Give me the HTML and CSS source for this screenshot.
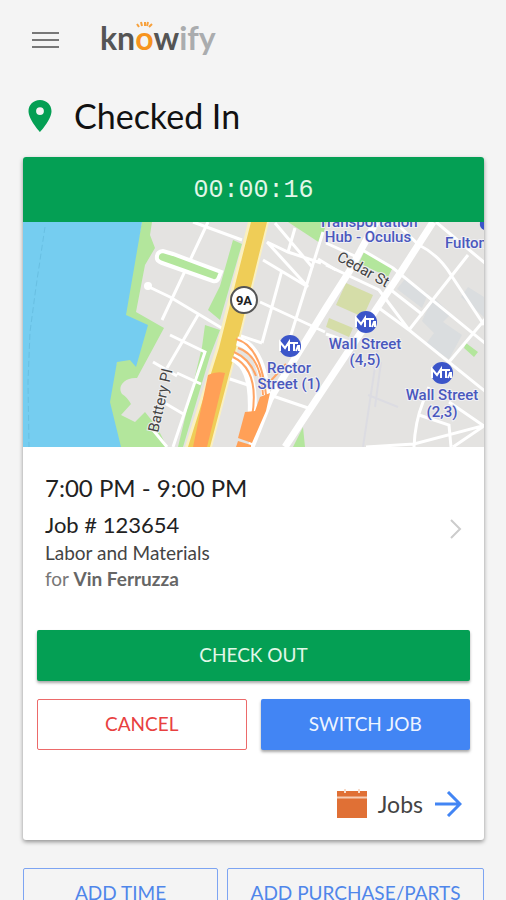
FILE: index.html
```html
<!DOCTYPE html>
<html lang="en">
<head>
<meta charset="utf-8">
<meta name="viewport" content="width=device-width, initial-scale=1">
<title>Knowify - Checked In</title>
<link rel="stylesheet" href="styles.css">
</head>

<body>
<header class="header">
	<button class="menu" type="button" aria-label="Menu"><span></span><span></span><span></span></button>
	<a class="logo" href="#">kn<span class="logo_o">o<svg class="rays" viewBox="0 0 18 7" aria-hidden="true">
		<path d="M2 3l2 3M6 1l1 4M10 1v4M13 1l-1 4M17 3l-3 3"/>
	</svg></span>w<span class="logo_ify">ify</span></a>
</header>

<main class="main">
	<div class="status">
		<svg class="pin" viewBox="0 0 24 32" aria-hidden="true">
			<path d="M12 0C5.200 0 .5 5 .5 11.200.5 19.500 12 32 12 32s11.500-12.500 11.500-20.800C23.500 5 18.800 0 12 0zm0 15a3.900 3.900 0 1 1 0-7.800 3.900 3.900 0 0 1 0 7.800z"/>
		</svg>
		<h1>Checked In</h1>
	</div>

	<section class="card">
		<div class="timer">00:00:16</div>

		<svg class="map" viewBox="0 0 461 225" role="img" aria-label="Map">
			<rect class="land" width="461" height="225"/>

			<!-- water and parks -->
			<path class="park" d="M119 0H129L127 13 132 26 122 43 113 90 141 106 114 156C101 155 94 165 99 172Q104 175 108 182L98 193 112 200 122 190 134 205 144 225H95L80 180 94 140 100 90z"/>
			<path class="water" d="M0 0H119L103 93 125 103 113 145 107 138 94 140 87 180 98 225H0z"/>
			<path class="ferry" d="M22 5L13 65 7 110 5 160 6 225"/>
			<path class="park" d="M210 18L219 22 197 98 185 88 197 64zM182 103L197 108 187 134 160 225H155L179 125zM265 0H304L297 21zM341 30L370 45 365 55 336 41zM443 121L455 130 451 135 441 126zM280 205L282 225H270z"/>
			<path class="square" d="M323 61L350 73 340 95 313 83zM306 96L330 106 326 115 303 105z"/>
			<path class="block" d="M410 75L428 92 420 100 439 113 426 137 403 122 411 111 399 99zM382 57L405 72 399 86 374 67zM445 65L461 75V95L438 75z"/>

			<!-- streets -->
			<g class="street">
				<path d="M124 64L147 75 197 105 215 113 239 121M185 0L139 98M170 0L219 18M147 113L182 130 150 225M175 93L144 146M130 140L154 154 147 150M140 180L162 193M130 208L144 225M154 151L178 162"/>
				<path d="M300 10L267 116M259 48L239 121M244 20L285 65M272 6L265 30M252 1L290 46M240 38L285 65M237 80L302 110M204 156L225 163M247 173L285 186M244 20L265 30 298 41M303 21L336 36M295 37L313 48"/>
				<path d="M303 43L356 68 386 108 463 170M375 3L396 23Q416 33 428 53L461 103M413 0L463 42M445 33L386 108M336 26L370 46 463 122M463 96L426 140M368 68L400 93M356 86L386 108"/>
				<path d="M406 165L400 180Q392 200 391 225M396 193L426 203 428 225M343 225L391 222 463 203M426 180L461 204 430 225M303 112L326 120"/>
			</g>
			<path class="faint" d="M355 125L340 225M345 173L375 185M358 140L352 185"/>
			<circle class="dot" cx="125" cy="64" r="4"/>
			<path class="track" d="M140 29Q133 30 134 37 135 40 142 42L190 59Q195 60 196 55L198 50 150 32z"/>
			<path class="avenue" d="M353 0L326 50 303 86 247 177 228 225M410 0L376 53 303 163 262 225"/>

			<!-- highway 9A -->
			<path class="highway_edge" d="M225 0H246L215 126 189 225H162L193 126z"/>
			<path class="highway" d="M228 0H244L213 126 187 225H165L196 126z"/>
			<path class="traffic" d="M185 153Q193 149 202 151L184 225H170z"/>
			<g class="ramp_edge"><path d="M214 119Q238 124 243 173M210 135Q232 144 229 195"/></g>
			<g class="ramp">
				<path d="M213 117Q238 124 243 173M215 126Q238 133 240 173M210 135Q237 148 229 195M211 130Q227 137 233 154M243 164L263 142"/>
			</g>
			<path class="traffic" d="M237 175L247 171 243 189 229 221 215 216 222 190 232 189zM215 219L228 223V225H213z"/>

			<circle class="shield" cx="221" cy="78" r="13"/>
			<text class="shield_text" x="221" y="83">9A</text>

			<!-- subway stations -->
			<g class="station">
				<circle cx="267" cy="124" r="11"/><circle cx="343" cy="100" r="11"/><circle cx="419" cy="151" r="11"/>
				<path d="M457 0H461V8Q456 6 457 0z"/>
			</g>
			<g class="mta">
				<path id="mta" d="M257 129V120L262 126 266 120V129M267 121H275M271 121V129M273 129L275 124H276V129"/>
				<use href="#mta" x="76" y="-24"/>
				<use href="#mta" x="152" y="27"/>
			</g>
			<g class="label">
				<text x="345" y="5">Transportation</text>
				<text x="345" y="20">Hub - Oculus</text>
				<text x="443" y="26">Fulton</text>
				<text x="266" y="151">Rector</text>
				<text x="266" y="167">Street (1)</text>
				<text x="342" y="127">Wall Street</text>
				<text x="342" y="143">(4,5)</text>
				<text x="419" y="178">Wall Street</text>
				<text x="419" y="195">(2,3)</text>
			</g>
			<g class="road_name">
				<text transform="translate(313 38) rotate(29)">Cedar St</text>
				<text transform="translate(135 211) rotate(-77)">Battery Pl</text>
			</g>
		</svg>

		<a class="job" href="#">
			<div class="job_info">
				<div class="time">7:00 PM - 9:00 PM</div>
				<div class="number">Job # 123654</div>
				<div class="detail">Labor and Materials</div>
				<div class="detail client">for <b>Vin Ferruzza</b></div>
			</div>
			<svg class="chevron" viewBox="0 0 12 20" aria-hidden="true"><path d="M1 1l9 9-9 9"/></svg>
		</a>

		<div class="actions">
			<button class="btn green wide" type="button">CHECK OUT</button>
			<button class="btn red" type="button">CANCEL</button>
			<button class="btn blue" type="button">SWITCH JOB</button>
		</div>

		<a class="jobs" href="#">
			<svg class="calendar" viewBox="0 0 30 30" aria-hidden="true">
				<path class="cal_body" d="M0 2H30V29H0z"/>
				<path class="cal_line" d="M0 8.500H30"/>
				<path class="cal_ring" d="M8 0V4M22 0V4"/>
			</svg>
			<span>Jobs</span>
			<svg class="arrow" viewBox="0 0 28 26" aria-hidden="true"><path d="M1 13H26M14 1l12 12-12 12"/></svg>
		</a>
	</section>

	<div class="more">
		<button class="btn outline" type="button">ADD TIME</button>
		<button class="btn outline" type="button">ADD PURCHASE/PARTS</button>
	</div>
</main>
</body>
</html>
```
FILE: styles.css
```css
* { box-sizing: border-box; }
body { margin: 0; background: #f4f4f4; color: #222; font-family: Lato, "Liberation Sans", sans-serif; overflow-x: hidden; }
a { color: inherit; text-decoration: none; }
svg { display: block; }

.header { display: flex; align-items: center; gap: 41px; height: 80px; padding: 0 32px; }
.menu { display: flex; flex-direction: column; gap: 5px; width: 27px; padding: 0; border: 0; background: none; cursor: pointer; }
.menu span { height: 2px; background: #777; }
.logo { padding-bottom: 4px; color: #555; font-size: 32px; line-height: 32px; font-weight: bold; }
.logo_o { position: relative; color: #f7941e; }
.logo_ify { color: #aaacae; }
.rays { position: absolute; left: 0; top: 3px; width: 18px; height: 7px; fill: none; stroke: #f7a13c; stroke-width: 2; }

.main { padding: 0 22px 0 23px; }
.status { display: flex; align-items: center; gap: 22px; height: 77px; padding: 0 5px 5px; }
.status h1 { margin: 0; color: #111; font-size: 34px; line-height: 40px; font-weight: normal; }
.pin { width: 24px; height: 32px; fill: #049f54; }

.card { background: #fff; border-radius: 3px; overflow: hidden; box-shadow: 0 2px 4px rgba(0,0,0,.4); }
.timer { height: 65px; background: #049f54; color: #e2f7e8; font: 25px/68px "Liberation Mono", monospace; text-align: center; }

.map { width: 100%; height: auto; }
.land { fill: #e4e3e1; }
.water { fill: #75cdf0; }
.ferry { fill: none; stroke: #68bfe2; stroke-dasharray: 6 3; }
.park { fill: #b3e69c; }
.square { fill: #d5dda8; }
.block { fill: #dadddf; }
.street { fill: none; stroke: #fff; stroke-width: 3; }
.faint { fill: none; stroke: #dcdce2; stroke-width: 2; }
.dot { fill: #fff; }
.track { fill: #b3e69c; stroke: #fff; stroke-width: 4; }
.avenue { fill: none; stroke: #fff; stroke-width: 7; }
.highway_edge { fill: #faf0c0; }
.highway { fill: #efcd57; }
.traffic { fill: #ffa057; }
.ramp_edge { fill: none; stroke: #fff; stroke-width: 9; }
.ramp { fill: none; stroke: #ffa565; stroke-width: 2; }
.shield { fill: #fff; stroke: #555; stroke-width: 2; }
.shield_text { fill: #222; font: bold 13px Roboto, sans-serif; text-anchor: middle; }
.station { fill: #3b55c9; }
.mta { fill: none; stroke: #fff; stroke-width: 2; }
.label { fill: #4a58bd; stroke: #f0f0f4; stroke-width: 2; paint-order: stroke; font: 500 15px Roboto, sans-serif; text-anchor: middle; }
.road_name { fill: #444; stroke: #f0f0f0; stroke-width: 2; paint-order: stroke; font: 15px Roboto, sans-serif; }

.job { display: flex; align-items: center; justify-content: space-between; padding: 25px 22px 38px; }
.time { font-size: 24px; line-height: 32px; margin-bottom: 6px; }
.number { font-size: 22px; line-height: 30px; }
.detail { color: #444; font-size: 19px; line-height: 26px; }
.client { color: #777; }
.client b { color: #666; font-weight: bold; }
.chevron { width: 12px; height: 20px; margin-bottom: 6px; fill: none; stroke: #ccc; stroke-width: 2; }

.actions { display: grid; grid-template-columns: 1fr 1fr; gap: 18px 14px; padding: 0 14px; }
.btn { height: 51px; padding: 0 0 2px; border: 0; border-radius: 2px; font: 19px Lato, "Liberation Sans", sans-serif; cursor: pointer; }
.wide { grid-column: 1 / 3; }
.green { background: #049f54; color: #e2f7e8; box-shadow: 0 2px 3px rgba(0,0,0,.35); }
.blue { background: #4285f4; color: #eef4ff; box-shadow: 0 2px 3px rgba(0,0,0,.35); }
.red { border: 1px solid #ec6a6a; background: #fff; color: #e84040; }

.jobs { display: flex; align-items: center; justify-content: flex-end; gap: 11px; height: 90px; padding: 18px 22px 0; font-size: 23px; color: #444; }
.calendar { width: 30px; height: 30px; fill: none; }
.cal_body { fill: #e07035; }
.cal_line { stroke: #f6cdb5; stroke-width: 2; }
.cal_ring { stroke: #f8dccb; stroke-width: 2; }
.arrow { width: 28px; height: 26px; fill: none; stroke: #4285f4; stroke-width: 3; }

.more { display: grid; grid-template-columns: 195fr 257fr; gap: 9px; padding-top: 28px; }
.outline { border: 1px solid #7da4f2; background: none; color: #4f86ea; }
```
